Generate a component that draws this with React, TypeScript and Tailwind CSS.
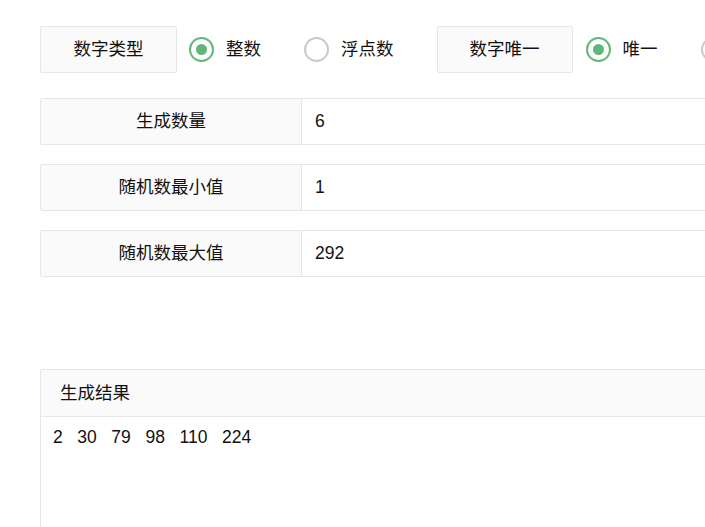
const font = { fontFamily: '"Liberation Sans", "Noto Sans CJK SC", sans-serif' };

const Radio = ({ label, checked }: { label?: string; checked?: boolean }) => (
  <div className="flex items-center mr-[43px] shrink-0">
    <span
      className={`w-[25px] h-[25px] rounded-full border-2 flex items-center justify-center ${
        checked ? "border-[#5FB878]" : "border-[#c9c9c9]"
      }`}
    >
      {checked && <span className="w-[11px] h-[11px] rounded-full bg-[#5FB878]" />}
    </span>
    {label && <span className="ml-[12px]">{label}</span>}
  </div>
);

const Row = ({ label, value }: { label: string; value: string }) => (
  <div className="flex h-[47px] border border-[#e6e6e6] rounded-[2px]">
    <div className="w-[261px] shrink-0 bg-[#fafafa] border-r border-[#e6e6e6] flex items-center justify-center">
      {label}
    </div>
    <div className="flex items-center pl-[13px]">{value}</div>
  </div>
);

export default function App() {
  const nums = [2, 30, 79, 98, 110, 224];
  return (
    <div className="w-[705px] h-[527px] overflow-hidden bg-white text-[17.5px] text-[#111]" style={font}>
      <div className="w-[1000px] pl-[40px] pt-[26px]">
        <div className="flex items-center">
          <div className="w-[137px] h-[47px] shrink-0 border border-[#e6e6e6] rounded-[2px] bg-[#fafafa] flex items-center justify-center mr-[12px]">
            数字类型
          </div>
          <Radio label="整数" checked />
          <Radio label="浮点数" />
          <div className="w-[136px] h-[47px] shrink-0 border border-[#e6e6e6] rounded-[2px] bg-[#fafafa] flex items-center justify-center mr-[13px]">
            数字唯一
          </div>
          <Radio label="唯一" checked />
          <Radio />
        </div>

        <div className="mt-[25px] flex flex-col gap-[19px] w-[900px]">
          <Row label="生成数量" value="6" />
          <Row label="随机数最小值" value="1" />
          <Row label="随机数最大值" value="292" />
        </div>

        <div className="mt-[92px] w-[900px] border border-[#e6e6e6] rounded-[2px] h-[300px]">
          <div className="h-[47px] bg-[#fafafa] border-b border-[#e6e6e6] flex items-center pl-[19px]">
            生成结果
          </div>
          <div className="px-[12px] pt-[9px] leading-[22px] whitespace-pre">
            {nums.join("   ")}
          </div>
        </div>
      </div>
    </div>
  );
}
